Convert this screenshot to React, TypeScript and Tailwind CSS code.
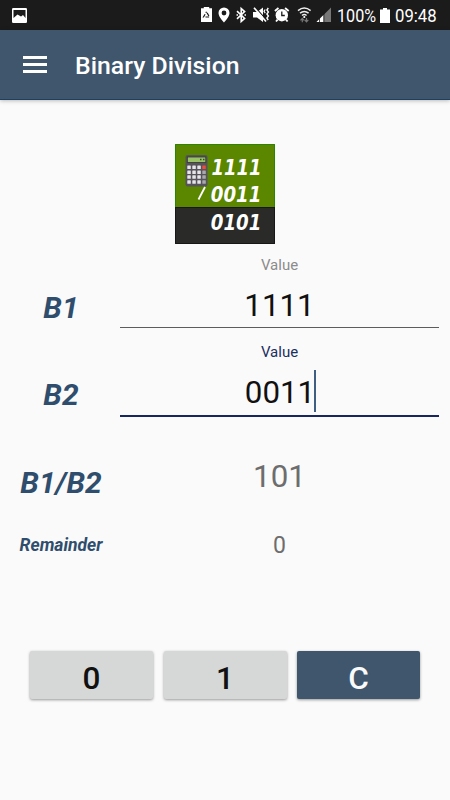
import React from "react";

function StatusIcons() {
  return (
    <svg className="block h-[30px] w-[132px] shrink-0" viewBox="200 0 132 30" fill="#fff">
      {/* recycling battery */}
      <path d="M203.800 7h5.400v1.300h2.800V22h-11V8.300h2.800z" />
      <path d="M206.500 11.800l3 5.200h-6z" fill="none" stroke="#1b1b1b" strokeWidth="1.200" strokeDasharray="3.600 1.600" strokeDashoffset="-1.200" />
      {/* location */}
      <path fillRule="evenodd" d="M224 7.500a5.500 5.500 0 0 0-5.500 5.500C218.500 17 224 22.500 224 22.500s5.500-5.500 5.500-9.500A5.500 5.500 0 0 0 224 7.500zm0 3.100a2.400 2.400 0 1 1 0 4.800 2.400 2.400 0 0 1 0-4.800z" />
      {/* bluetooth */}
      <path d="M237 11.200l7.600 7.200-3.400 3V8.600l3.400 3-7.600 7.200" fill="none" stroke="#fff" strokeWidth="1.600" />
      <path d="M236.500 15h1.500M244.500 15h1.500" stroke="#fff" strokeWidth="1.400" />
      {/* muted with vibration */}
      <path d="M253 12h4l6-4.500v14.500l-6-4.500h-4z" />
      <path d="M255.300 7.300l12 13.500" stroke="#1b1b1b" strokeWidth="1.200" />
      <path d="M254 7.800l12 13.700" stroke="#fff" strokeWidth="1.700" />
      <path d="M268.300 8l-1.400 2 1.500 2-1.500 2 1.500 2-1.500 2 1.300 2" fill="none" stroke="#fff" strokeWidth="1.400" />
      <path d="M265.200 9.500l-1.200 1.800 1.300 1.900" fill="none" stroke="#fff" strokeWidth="1.200" />
      {/* alarm */}
      <circle cx="281.800" cy="15.200" r="6.200" />
      <path d="M274.900 11l3.600-3M285.100 8l3.600 3" stroke="#fff" strokeWidth="1.800" />
      <path d="M277.600 19.600l-1.600 1.900M286 19.600l1.600 1.900" stroke="#fff" strokeWidth="1.800" />
      <path d="M281.800 11.500v4h3" fill="none" stroke="#1b1b1b" strokeWidth="1.300" />
      {/* wifi */}
      <g fill="none" stroke="#eee" strokeWidth="1.500">
        <path d="M298 10.600q6.300-5 12.600 0M300 13.200q4.300-3.400 8.600 0M302 15.500q2.300-1.800 4.600 0" />
      </g>
      <circle cx="304.300" cy="17" r="1.100" />
      <path d="M302.300 22.200v-3.700M300.500 20.300l1.800-2 1.800 2M306.500 18v3.700M304.700 19.800l1.800 2 1.800-2" fill="none" stroke="#777" strokeWidth="1.200" />
      {/* signal */}
      <path d="M331 7.500V22h-14.500z" fill="#777" />
      <path d="M323.500 15v7h-7z" />
      <path d="M319.500 17v5M323.900 13v9" stroke="#1b1b1b" strokeWidth=".8" />
    </svg>
  );
}

function Logo() {
  const keys = [0, 1, 2, 3].flatMap((r) => [0, 1, 2, 3].map((c) => ({ r, c })));
  return (
    <svg className="block size-[100px]" viewBox="0 0 100 100">
      <rect width="100" height="100" fill="#2a2a29" />
      <rect width="100" height="63" fill="#5a8600" />
      <path d="M.5 63V.5h99V63" fill="none" stroke="#2c8500" />
      <path d="M0 63.500h100M.5 63v36.500h99V63" fill="none" stroke="#171717" />
      <rect x="10.500" y="11" width="22" height="31.500" rx="2" fill="#56545a" />
      <rect x="12.300" y="13" width="18.500" height="5.500" fill="#99c266" stroke="#333" strokeWidth=".8" />
      <path d="M25 15.500h1.500M28 15.500h1.500" stroke="#34502a" strokeWidth="1.500" />
      {keys.map(({ r, c }) => (
        <rect
          key={`${r}-${c}`}
          x={12.300 + c * 5}
          y={21.500 + r * 4.900}
          width="3.500"
          height="3.500"
          rx=".5"
          fill={c === 3 ? (r === 0 ? "#f04b3c" : "#aaa8ac") : "#e6e4e8"}
        />
      ))}
      <path d="M30 43L23.500 55.500" stroke="#fff" strokeWidth="1.800" />
      <g
        fill="#fff"
        className="font-['DejaVu_Sans_Condensed','DejaVu_Sans',sans-serif] text-[22px] font-bold italic"
      >
        <text x="36.500" y="31" textLength="50" lengthAdjust="spacingAndGlyphs">1111</text>
        <text x="35.800" y="58" textLength="50.500" lengthAdjust="spacingAndGlyphs">0011</text>
        <text x="35.800" y="86" textLength="50.500" lengthAdjust="spacingAndGlyphs">0101</text>
      </g>
    </svg>
  );
}

function Label({ children, className }: { children: React.ReactNode; className: string }) {
  return (
    <div className={`w-[120px] shrink-0 pl-[2px] text-center font-bold italic whitespace-nowrap text-[#2f4d6c] ${className}`}>
      {children}
    </div>
  );
}

export default function App() {
  return (
    <div className="flex h-[800px] w-[450px] flex-col overflow-hidden bg-[#fafafa] font-[Roboto,sans-serif]">
      <div className="flex h-[30px] shrink-0 items-center bg-[#1b1b1b] text-white">
        <svg className="ml-3 block h-[15px] w-[15px]" viewBox="0 0 15 15">
          <rect width="15" height="15" rx="1.300" fill="#fff" />
          <path d="M1.500 2h12v8l-2.500-3-2 1.500L5.500 6.500l-4 3.500z" fill="#1b1b1b" />
        </svg>
        <div className="ml-[173px]">
          <StatusIcons />
        </div>
        <div className="ml-[5px] w-[39px] pt-px text-[19px] leading-[30px]">
          <span className="inline-block origin-left scale-x-[.85]">100%</span>
        </div>
        <svg className="ml-1 block h-[15px] w-[10px]" viewBox="0 0 10 15">
          <path d="M3 0h4v1.500h3V15H0V1.500h3z" fill="#fff" />
        </svg>
        <div className="ml-[5px] w-[44px] pt-px text-[19px] leading-[30px]">
          <span className="inline-block origin-left scale-x-[.88]">09:48</span>
        </div>
      </div>

      <header className="z-10 flex h-[70px] shrink-0 items-center border-b border-[#203f60] bg-[#3f566d] shadow-[0_1px_4px_rgba(0,0,0,0.25)]">
        <div className="ml-[23px] flex w-6 flex-col gap-[4px]">
          <span className="h-[3px] bg-white" />
          <span className="h-[3px] bg-white" />
          <span className="h-[3px] bg-white" />
        </div>
        <h1 className="ml-7 pt-[3px] text-[24.8px] font-medium whitespace-nowrap text-white">Binary Division</h1>
      </header>

      <main className="flex flex-col">
        <div className="mt-11 flex justify-center">
          <Logo />
        </div>

        <div className="flex h-[84px]">
          <Label className="pt-[42px] text-[30px] leading-[44px]">B1</Label>
          <div className="mr-[11px] flex flex-1 flex-col border-b border-[#5c5c5c] text-center">
            <div className="pt-[11px] text-[15px] leading-5 text-[#8c8c8c]">Value</div>
            <div className="pt-[9px] text-[31.3px] leading-[44px] text-[#111]">1111</div>
          </div>
        </div>

        <div className="flex h-[89px]">
          <Label className="pt-[45px] text-[30px] leading-[44px]">B2</Label>
          <div className="mr-[11px] flex flex-1 flex-col border-b-2 border-[#18265f] text-center">
            <div className="pt-[14px] text-[15px] leading-5 text-[#1d2f61]">Value</div>
            <div className="flex items-start justify-center pt-2 text-[31.3px] leading-[46px] text-[#111]">
              <span>0011</span>
              <span className="-mr-0.5 -ml-px h-[42px] w-[2px] bg-[#3f5f82]" />
            </div>
          </div>
        </div>

        <div className="flex h-[91px]">
          <Label className="pt-[44px] text-[30px] leading-[44px]">B1/B2</Label>
          <div className="mr-[11px] flex-1 pt-[38px] text-center text-[31.3px] leading-[44px] text-[#6d6d6d]">101</div>
        </div>

        <div className="flex h-[76px]">
          <Label className="pt-[25px] text-[17.5px] leading-6">Remainder</Label>
          <div className="mr-[11px] flex-1 pt-[26px] text-center text-[23px] leading-6 text-[#6d6d6d]">0</div>
        </div>

        <div className="mx-[30px] mt-[67px] grid grid-cols-3 gap-x-[10.5px] text-center text-[31.5px] leading-[56px] font-medium">
          <button className="h-12 rounded-[2px] bg-[#d6d8d7] text-[#111] shadow-[0_1px_3px_rgba(0,0,0,0.4)]">0</button>
          <button className="h-12 rounded-[2px] bg-[#d6d8d7] text-[#111] shadow-[0_1px_3px_rgba(0,0,0,0.4)]">1</button>
          <button className="h-12 rounded-[2px] bg-[#3f566d] text-[#fafafa] shadow-[0_1px_3px_rgba(0,0,0,0.4)]">C</button>
        </div>
      </main>
    </div>
  );
}
